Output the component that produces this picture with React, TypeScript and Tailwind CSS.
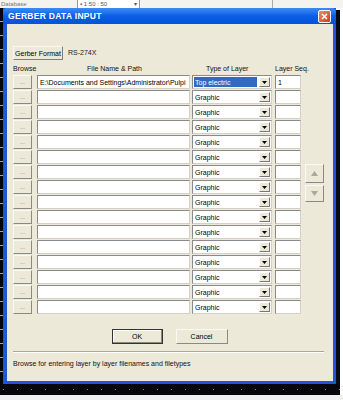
import React from "react";

const rows = Array.from({ length: 16 }, (_, i) => i);

function DownArrow() {
  return (
    <svg width="5" height="3" viewBox="0 0 5 3">
      <polygon points="0,0 5,0 2.5,3" fill="#000" />
    </svg>
  );
}

export default function App() {
  return (
    <div
      className="w-[343px] h-[400px] bg-white overflow-hidden flex flex-col"
      style={{ fontFamily: '"Liberation Sans", Arial, sans-serif' }}
    >
      {/* top strip behind the dialog */}
      <div className="h-[8px] flex bg-[#f4f3ee] text-[6px] leading-[8px] text-[#777]">
        <div className="w-[77px] pl-[1px]">Database</div>
        <div className="w-[63px] bg-white border-x border-[#999] flex pl-[2px] text-[#555]">
          <span className="flex-1">▪ 1:50 : 50</span>
          <span className="pr-[2px]">▾</span>
        </div>
        <div className="w-[133px] border-r border-[#aaa]" />
        <div className="flex-1" />
      </div>

      <div className="flex h-[376px]">
        {/* left dark strip */}
        <div className="w-[3px] bg-[repeating-linear-gradient(to_bottom,#050510_0px,#050510_13px,#9aa_13px,#9aa_14px)]" />
        {/* dialog */}
        <div className="w-[333px] flex flex-col bg-[#1f55d6] pl-[4px] pr-[3px] pb-[3px]">
          {/* title bar */}
          <div className="h-[16px] -ml-[4px] -mr-[3px] pl-[5px] pr-[5px] flex items-center rounded-t-[4px] bg-gradient-to-b from-[#3d8bf4] via-[#0a5ee6] to-[#0552d8]">
            <span className="flex-1 text-white font-bold text-[8.5px] tracking-[0.3px] leading-none">
              GERBER DATA INPUT
            </span>
            <div className="w-[13px] h-[13px] mt-[1px] rounded-[2px] border border-white bg-gradient-to-br from-[#f08a6a] to-[#c8401c] flex items-center justify-center">
              <svg width="7" height="7" viewBox="0 0 7 7">
                <path d="M1 1 L6 6 M6 1 L1 6" stroke="#fff" strokeWidth="1.5" />
              </svg>
            </div>
          </div>

          {/* content */}
          <div className="flex-1 bg-[#ece9d8] flex flex-col text-[7px] text-black pl-[6px] pr-[9px]">
            <div className="h-[22px]" />
            <div className="flex items-center h-[14px]">
              <div className="w-[50px] h-[14px] border border-[#f8f8f4] border-r-[#808080] border-b-[#808080] bg-[#ece9d8] flex items-center justify-center leading-none">
                Gerber Format
              </div>
              <span className="ml-[5px] text-[#222]">RS-274X</span>
            </div>
            <div className="h-[15px] flex items-center pt-[2px] text-[#111] leading-none">
              <div className="w-[24px]">Browse</div>
              <div className="w-[155px] text-center">File Name &amp; Path</div>
              <div className="w-[83px] pl-[14px]">Type of Layer</div>
              <div>Layer Seq.</div>
            </div>

            <div className="flex">
              <div className="flex flex-col gap-[1px]">
                {rows.map((i) => (
                  <div key={i} className="flex h-[14px]">
                    <div className="w-[19px] h-[14px] bg-[#ece9d8] border border-[#fafaf5] border-r-[#8a8a80] border-b-[#8a8a80] flex items-center justify-center text-[#777] text-[6px] leading-none">
                      ...
                    </div>
                    <div className="ml-[5px] w-[153px] h-[14px] bg-white border border-[#8a8a8a] border-r-[#d4d0c8] border-b-[#d4d0c8] flex items-center pl-[2px] overflow-hidden whitespace-nowrap leading-none">
                      {i === 0 ? "E:\\Documents and Settings\\Administrator\\Pulpi" : ""}
                    </div>
                    <div className="ml-[2px] w-[80px] h-[14px] bg-white border border-[#8a8a8a] border-r-[#d4d0c8] border-b-[#d4d0c8] flex items-center pl-[1px] pr-[1px]">
                      <div
                        className={
                          i === 0
                            ? "flex-1 h-[10px] bg-[#316ac5] text-white flex items-center pl-[1px] leading-none"
                            : "flex-1 h-[10px] flex items-center pl-[1px] leading-none"
                        }
                      >
                        {i === 0 ? "Top electric" : "Graphic"}
                      </div>
                      <div className="ml-[2px] w-[11px] h-[10px] bg-[#ece9d8] border border-[#fff] border-r-[#777] border-b-[#777] flex items-center justify-center">
                        <DownArrow />
                      </div>
                    </div>
                    <div className="ml-[3px] w-[26px] h-[14px] bg-white border border-[#8a8a8a] border-r-[#d4d0c8] border-b-[#d4d0c8] flex items-center pl-[2px] leading-none">
                      {i === 0 ? "1" : ""}
                    </div>
                  </div>
                ))}
              </div>
              <div className="ml-[4px] pt-[89px] flex flex-col gap-[2px]">
                <div className="w-[19px] h-[19px] bg-[#ece9d8] border border-[#fafaf5] border-r-[#8a8a80] border-b-[#8a8a80] flex items-center justify-center">
                  <svg width="7" height="5" viewBox="0 0 7 5">
                    <polygon points="3.5,0 7,5 0,5" fill="#a8a89c" />
                  </svg>
                </div>
                <div className="w-[19px] h-[17px] bg-[#ece9d8] border border-[#fafaf5] border-r-[#8a8a80] border-b-[#8a8a80] flex items-center justify-center">
                  <svg width="7" height="5" viewBox="0 0 7 5">
                    <polygon points="0,0 7,0 3.5,5" fill="#a8a89c" />
                  </svg>
                </div>
              </div>
            </div>

            <div className="flex justify-center gap-[13px] mt-[15px] pl-[2px]">
              <div className="w-[51px] h-[15px] border border-[#333] bg-[#ece9d8] flex items-center justify-center leading-none shadow-[inset_-1px_-1px_0_#8a8a80,inset_1px_1px_0_#fff]">
                OK
              </div>
              <div className="w-[52px] h-[15px] border border-[#fafaf5] border-r-[#8a8a80] border-b-[#8a8a80] bg-[#ece9d8] flex items-center justify-center leading-none">
                Cancel
              </div>
            </div>

            <div className="mt-[7px] h-[2px] border-t border-[#aca899] border-b border-b-white" />
            <div className="mt-[7px] leading-none text-[#111]">
              Browse for entering layer by layer filenames and filetypes
            </div>
          </div>
        </div>
        {/* right dark strip */}
        <div className="w-[4px] bg-[#0a0a14] mt-[2px]" />
      </div>

      {/* bottom dark band */}
      <div className="w-[340px] h-[11px] bg-[#06060c] flex items-center pl-[3px]">
        <div className="w-full h-[1px] bg-[repeating-linear-gradient(to_right,#889_0px,#889_1px,transparent_1px,transparent_14px)]" />
      </div>
      <div className="flex-1 bg-[#f0f0f0]" />
    </div>
  );
}
